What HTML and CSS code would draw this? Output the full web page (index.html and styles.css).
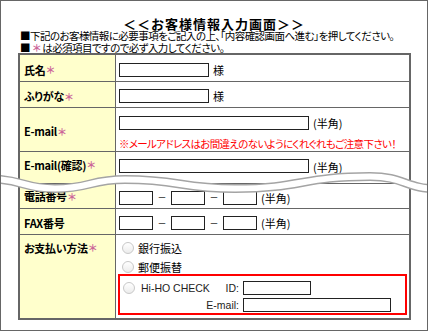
FILE: index.html
```html
<!DOCTYPE html>
<html lang="ja">
<head>
    <meta charset="UTF-8">
    <title>お客様情報入力画面</title>
    <link rel="stylesheet" href="styles.css">
</head>
<body>
    <div class="frame">
        <h1 class="title">＜＜お客様情報入力画面＞＞</h1>
        <p class="note">■下記のお客様情報に必要事項をご記入の上、「内容確認画面へ進む」を押してください。</p>
        <p class="note">■ <span class="req">＊</span> は必須項目ですので必ず入力してください。</p>

        <div class="form">
            <div class="label">氏名<span class="req">＊</span></div>
            <div class="value"><input type="text" class="in-name"><span class="unit">様</span></div>

            <div class="label">ふりがな<span class="req">＊</span></div>
            <div class="value"><input type="text" class="in-name"><span class="unit">様</span></div>

            <div class="label">E-mail<span class="req">＊</span></div>
            <div class="value value-stack">
                <div class="line"><input type="text" class="in-mail"><span class="unit">(半角)</span></div>
                <p class="warn">※メールアドレスはお間違えのないようにくれぐれもご注意下さい！</p>
            </div>

            <div class="label label-top">E-mail(確認)<span class="req">＊</span></div>
            <div class="value value-top"><input type="text" class="in-mail"><span class="unit">(半角)</span></div>

            <div class="label label-low">電話番号<span class="req">＊</span></div>
            <div class="value">
                <input type="text" class="in-tel"><span class="dash">－</span><input type="text" class="in-tel"><span class="dash">－</span><input type="text" class="in-tel"><span class="unit">(半角)</span>
            </div>

            <div class="label">FAX番号</div>
            <div class="value">
                <input type="text" class="in-tel"><span class="dash">－</span><input type="text" class="in-tel"><span class="dash">－</span><input type="text" class="in-tel"><span class="unit">(半角)</span>
            </div>

            <div class="label label-top">お支払い方法<span class="req">＊</span></div>
            <div class="value pay">
                <label class="opt"><input type="radio" name="pay">銀行振込</label>
                <label class="opt"><input type="radio" name="pay">郵便振替</label>
                <div class="hiho">
                    <div class="hiho-name"><input type="radio" name="pay"><span class="latin">Hi-HO CHECK</span><span class="latin id">ID:</span></div>
                    <input type="text" class="in-id">
                    <span class="latin hiho-label">E-mail:</span>
                    <input type="text" class="in-hmail">
                </div>
            </div>
        </div>

        <!-- cut mark across the page -->
        <svg class="cut" width="430" height="45" viewBox="0 0 430 45">
            <path d="M -10 19 C 22 19, 23 28.5, 55 28.5 C 90 28.5, 90 19.5, 125 19.5 C 180 19.5, 180 28.5, 235 28.5 C 302 28.5, 302 16.5, 370 16.5 C 405 16.5, 405 29, 440 29" fill="none" stroke="#a4a4a4" stroke-width="9"/>
            <path d="M -10 19 C 22 19, 23 28.5, 55 28.5 C 90 28.5, 90 19.5, 125 19.5 C 180 19.5, 180 28.5, 235 28.5 C 302 28.5, 302 16.5, 370 16.5 C 405 16.5, 405 29, 440 29" fill="none" stroke="#fff" stroke-width="6"/>
        </svg>
    </div>
</body>
</html>
```

FILE: styles.css
```css
body {
    margin: 0;
    background: #fff;
    font-family: "Noto Sans CJK JP", sans-serif;
    font-size: 11px;
    color: #000;
    font-feature-settings: "palt";
}
.frame {
    position: relative;
    box-sizing: border-box;
    width: 428px;
    height: 331px;
    border: 1px solid #666;
    padding: 16px 0 0 17px;
    overflow: hidden;
}
.title {
    margin: 0 17px 0 0;
    font-size: 13px;
    line-height: 13px;
    letter-spacing: 1px;
    text-align: center;
    font-feature-settings: normal;
}
.note {
    margin: 0 0 0 2px;
    font-size: 10.5px;
    line-height: 12px;
    letter-spacing: -0.55px;
    white-space: nowrap;
}
.req {
    color: #cc6699;
    font-size: 10px;
    font-weight: bold;
    margin-left: 1px;
}
.form {
    display: grid;
    grid-template-columns: 95px 293px;
    grid-template-rows: 26px 25px 43px 31px 24px 25px 83px;
    gap: 1px;
    width: 393px;
    box-sizing: border-box;
    margin-top: -1px;
    background: #666;
    border: 2px solid #666;
}
.label {
    display: flex;
    align-items: center;
    padding: 3px 0 0 4px;
    background: #ffffcc;
    font-size: 11px;
    font-weight: bold;
    letter-spacing: -0.3px;
    white-space: nowrap;
}
.label-low {
    padding-top: 0;
}
.label-top {
    align-items: flex-start;
    padding-top: 5px;
}
.value {
    display: flex;
    align-items: center;
    padding: 3px 0 0 3px;
    background: #fff;
}
.value-stack {
    flex-direction: column;
    align-items: flex-start;
    justify-content: flex-start;
    padding-top: 7px;
}
.value-top {
    align-items: flex-start;
    padding-top: 7px;
}
.line {
    display: flex;
    align-items: center;
}
.warn {
    margin: 6px 0 0;
    color: #f00;
    font-size: 10.5px;
    line-height: 13px;
    letter-spacing: -0.65px;
    white-space: nowrap;
}
input[type="text"] {
    box-sizing: border-box;
    height: 14px;
    margin: 0;
    padding: 0;
    border: 1px solid #222;
    background: #fff;
}
.in-name { width: 90px; }
.in-mail { width: 190px; }
.in-tel { width: 34px; }
.in-id { width: 68px; }
.in-hmail { width: 148px; }
.unit {
    margin-left: 4px;
}
.dash {
    width: 18px;
    text-align: center;
    font-size: 9px;
}
.pay {
    flex-direction: column;
    align-items: stretch;
    padding: 3px 2px 0 0;
}
.opt {
    display: flex;
    align-items: center;
    gap: 4px;
    height: 19px;
    padding-left: 6px;
}
input[type="radio"] {
    appearance: none;
    box-sizing: border-box;
    width: 12px;
    height: 12px;
    margin: 0;
    border: 1px solid #c8c8c8;
    border-radius: 50%;
    background: linear-gradient(#fff, #ececec);
}
.hiho {
    display: grid;
    grid-template-columns: 119px 148px;
    grid-auto-rows: 17px;
    column-gap: 4px;
    align-items: center;
    margin: -2px 0 0 2px;
    padding: 3px 0 0 0;
    border: 2px solid #f00;
    height: 41px;
    box-sizing: border-box;
}
.hiho-name {
    display: flex;
    align-items: center;
    padding-left: 3px;
}
.hiho-name .latin:first-of-type {
    margin-left: 6px;
}
.latin {
    font-family: "Liberation Sans", sans-serif;
    font-size: 10.5px;
    color: #222;
}
.id {
    margin-left: auto;
}
.hiho-label {
    text-align: right;
}
.cut {
    position: absolute;
    left: -1px;
    top: 159px;
}
```
